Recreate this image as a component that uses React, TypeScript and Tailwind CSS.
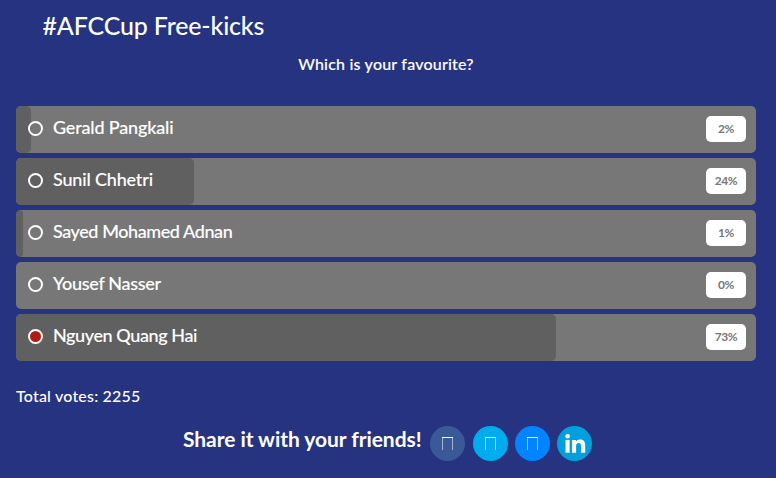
const options = [
  { name: "Gerald Pangkali", percent: 2, tracking: "tracking-[-0.17px]" },
  { name: "Sunil Chhetri", percent: 24, tracking: "tracking-[-0.17px]" },
  { name: "Sayed Mohamed Adnan", percent: 1, tracking: "tracking-[-0.42px]" },
  { name: "Yousef Nasser", percent: 0, tracking: "tracking-[-0.3px]" },
  { name: "Nguyen Quang Hai", percent: 73, tracking: "tracking-[-0.4px]", selected: true },
];

type OptionProps = { name: string; percent: number; tracking: string; selected?: boolean };

function Option({ name, percent, tracking, selected }: OptionProps) {
  return (
    <li className="relative flex h-[47px] items-center overflow-hidden rounded-[5px] bg-[#777777] pr-[10px] pl-3">
      <div className="absolute inset-y-0 left-0 rounded-[5px] bg-[#606060]" style={{ width: `${percent}%` }} />
      <span
        className={`relative mt-[-2px] size-[15px] shrink-0 rounded-full border-2 border-white ${selected ? "bg-[#b01c14]" : ""}`}
      />
      <span
        className={`relative mt-[-5px] ml-[10px] flex-1 text-[18px] leading-6 font-medium [-webkit-text-stroke:0.12px_white] ${tracking}`}
      >
        {name}
      </span>
      <span className="relative mt-[-1px] flex h-[26px] w-10 items-center justify-center rounded-[5px] bg-white text-[12px] font-bold tracking-[-0.5px] text-[#777777]">
        {percent}%
      </span>
    </li>
  );
}

function MissingGlyph() {
  return (
    <svg width="11" height="13" viewBox="0 0 11 13" fill="none" stroke="white" shapeRendering="crispEdges">
      <path d="M0 .5H11" />
      <path d="M.5 1V13M10.5 1V13" opacity=".55" />
    </svg>
  );
}

function LinkedInIcon() {
  return (
    <svg className="ml-px" width="21" height="19" viewBox="0 0 21 19" fill="white">
      <circle cx="2.6" cy="2.3" r="2.3" />
      <path d="M.5 5.9H4.6V18.7H.5Z" />
      <path d="M7 5.9H10.9V7.7C11.6 6.4 13.1 5.5 15 5.5C19.2 5.5 20.2 8.1 20.2 11.8V18.7H16V12.4C16 10.8 15.8 9 13.8 9C11.7 9 11.1 10.5 11.1 12.4V18.7H7Z" />
    </svg>
  );
}

export default function App() {
  return (
    <main className="h-[478px] w-[776px] overflow-hidden bg-[#263380] px-4 pr-5 font-['Lato',sans-serif] text-white">
      <h1 className="pt-[7px] pl-[26.5px] text-[25px] leading-9 font-medium tracking-[-0.17px]">#AFCCup Free-kicks</h1>
      <p className="mt-[9px] text-center text-[16px] leading-6 font-medium tracking-[0.21px] [-webkit-text-stroke:0.12px_white]">
        Which is your favourite?
      </p>
      <ul className="mt-[30px] flex flex-col gap-[5px]">
        {options.map((option) => (
          <Option key={option.name} {...option} />
        ))}
      </ul>
      <p className="mt-[23px] text-[16px] leading-6 font-medium tracking-[0.2px]">Total votes: 2255</p>
      <div className="mt-[18px] flex pl-[167px]">
        <h2 className="mt-[-1px] w-[247px] text-[21px] leading-7 font-bold tracking-[-0.05px] whitespace-nowrap">
          Share it with your friends!
        </h2>
        <div className="flex gap-[7px]">
          <a className="mr-px flex size-[35px] items-center justify-center rounded-full bg-[#3b5998]">
            <MissingGlyph />
          </a>
          <a className="flex size-[35px] items-center justify-center rounded-full bg-[#00aced]">
            <MissingGlyph />
          </a>
          <a className="flex size-[35px] items-center justify-center rounded-full bg-[#0084ff]">
            <MissingGlyph />
          </a>
          <a className="flex size-[35px] items-center justify-center rounded-full bg-[#00a0dc]">
            <LinkedInIcon />
          </a>
        </div>
      </div>
    </main>
  );
}
